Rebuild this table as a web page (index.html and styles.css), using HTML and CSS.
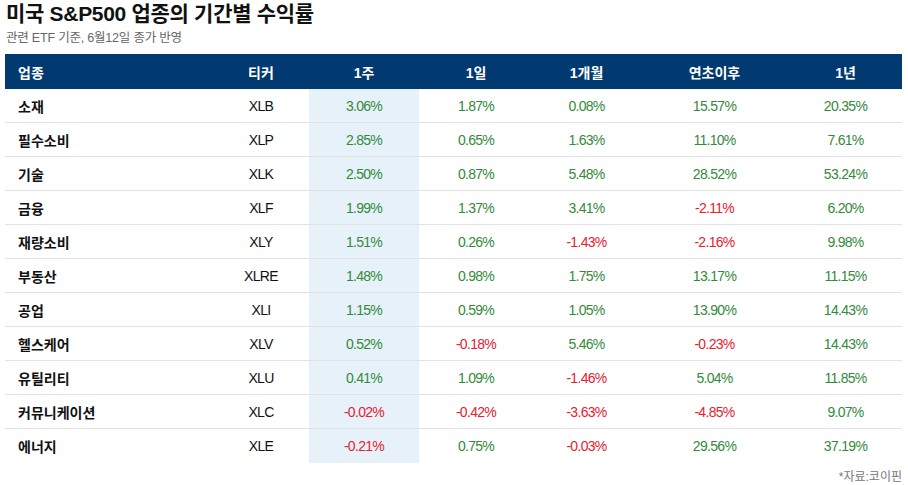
FILE: index.html
```html
<!DOCTYPE html>
<html lang="ko">
<head>
<meta charset="utf-8">
<link rel="stylesheet" href="styles.css">
</head>
<body>
<div class="page">
  <h1 class="title">미국 S&amp;P500 업종의 기간별 수익률</h1>
  <p class="subtitle">관련 ETF 기준, 6월12일 종가 반영</p>
  <table class="tbl">
    <colgroup>
      <col class="c-name"><col class="c-tic"><col class="c-w"><col class="c-d"><col class="c-m"><col class="c-y"><col class="c-1y">
    </colgroup>
    <thead>
      <tr><th class="left">업종</th><th>티커</th><th>1주</th><th>1일</th><th>1개월</th><th>연초이후</th><th>1년</th></tr>
    </thead>
    <tbody>
      <tr><td class="name">소재</td><td>XLB</td><td class="hl up">3.06%</td><td class="up">1.87%</td><td class="up">0.08%</td><td class="up">15.57%</td><td class="up">20.35%</td></tr>
      <tr><td class="name">필수소비</td><td>XLP</td><td class="hl up">2.85%</td><td class="up">0.65%</td><td class="up">1.63%</td><td class="up">11.10%</td><td class="up">7.61%</td></tr>
      <tr><td class="name">기술</td><td>XLK</td><td class="hl up">2.50%</td><td class="up">0.87%</td><td class="up">5.48%</td><td class="up">28.52%</td><td class="up">53.24%</td></tr>
      <tr><td class="name">금융</td><td>XLF</td><td class="hl up">1.99%</td><td class="up">1.37%</td><td class="up">3.41%</td><td class="down">-2.11%</td><td class="up">6.20%</td></tr>
      <tr><td class="name">재량소비</td><td>XLY</td><td class="hl up">1.51%</td><td class="up">0.26%</td><td class="down">-1.43%</td><td class="down">-2.16%</td><td class="up">9.98%</td></tr>
      <tr><td class="name">부동산</td><td>XLRE</td><td class="hl up">1.48%</td><td class="up">0.98%</td><td class="up">1.75%</td><td class="up">13.17%</td><td class="up">11.15%</td></tr>
      <tr><td class="name">공업</td><td>XLI</td><td class="hl up">1.15%</td><td class="up">0.59%</td><td class="up">1.05%</td><td class="up">13.90%</td><td class="up">14.43%</td></tr>
      <tr><td class="name">헬스케어</td><td>XLV</td><td class="hl up">0.52%</td><td class="down">-0.18%</td><td class="up">5.46%</td><td class="down">-0.23%</td><td class="up">14.43%</td></tr>
      <tr><td class="name">유틸리티</td><td>XLU</td><td class="hl up">0.41%</td><td class="up">1.09%</td><td class="down">-1.46%</td><td class="up">5.04%</td><td class="up">11.85%</td></tr>
      <tr><td class="name">커뮤니케이션</td><td>XLC</td><td class="hl down">-0.02%</td><td class="down">-0.42%</td><td class="down">-3.63%</td><td class="down">-4.85%</td><td class="up">9.07%</td></tr>
      <tr class="last"><td class="name">에너지</td><td>XLE</td><td class="hl down">-0.21%</td><td class="up">0.75%</td><td class="down">-0.03%</td><td class="up">29.56%</td><td class="up">37.19%</td></tr>
    </tbody>
  </table>
  <p class="source">*자료:코이핀</p>
</div>
</body>
</html>
```
FILE: styles.css
```css
html, body {
  margin: 0;
  padding: 0;
  background: #ffffff;
}
body {
  font-family: "Liberation Sans", Arial, "Noto Sans CJK KR", sans-serif;
  color: #111111;
}
.page {
  padding: 0 6px 0 5px;
}
.title {
  margin: 0;
  padding: 2px 0 0 1px;
  font-size: 21px;
  line-height: 24px;
  font-weight: bold;
  color: #111111;
  letter-spacing: -0.3px;
}
.subtitle {
  margin: 4px 0 0 1px;
  font-size: 12.5px;
  line-height: 16px;
  color: #666666;
  letter-spacing: -0.2px;
}
.tbl {
  margin-top: 8px;
  width: 897px;
  border-collapse: collapse;
  table-layout: fixed;
}
.c-name { width: 208px; }
.c-tic { width: 96px; }
.c-w { width: 110px; }
.c-d { width: 114px; }
.c-m { width: 107px; }
.c-y { width: 149px; }
.c-1y { width: 113px; }
.tbl th {
  background: #003a70;
  color: #ffffff;
  font-size: 14px;
  font-weight: bold;
  height: 35px;
  padding: 0;
  text-align: center;
  vertical-align: middle;
}
.tbl th.left {
  text-align: left;
  padding-left: 13px;
}
.tbl td {
  height: 33px;
  padding: 0;
  font-size: 14px;
  letter-spacing: -0.7px;
  text-align: center;
  vertical-align: middle;
  border-bottom: 1px solid #e3e3e3;
  color: #111111;
}
.tbl tr.last td {
  border-bottom: none;
  height: 34px;
}
.tbl td.name {
  text-align: left;
  padding-left: 13px;
  font-weight: bold;
  font-size: 14px;
  letter-spacing: 0;
}
.tbl td.hl {
  background: #e7f1fa;
}
.tbl td.up {
  color: #338a3a;
}
.tbl td.down {
  color: #e5212f;
}
.source {
  margin: 4px 0 0 0;
  text-align: right;
  font-size: 12px;
  color: #777777;
}
```
